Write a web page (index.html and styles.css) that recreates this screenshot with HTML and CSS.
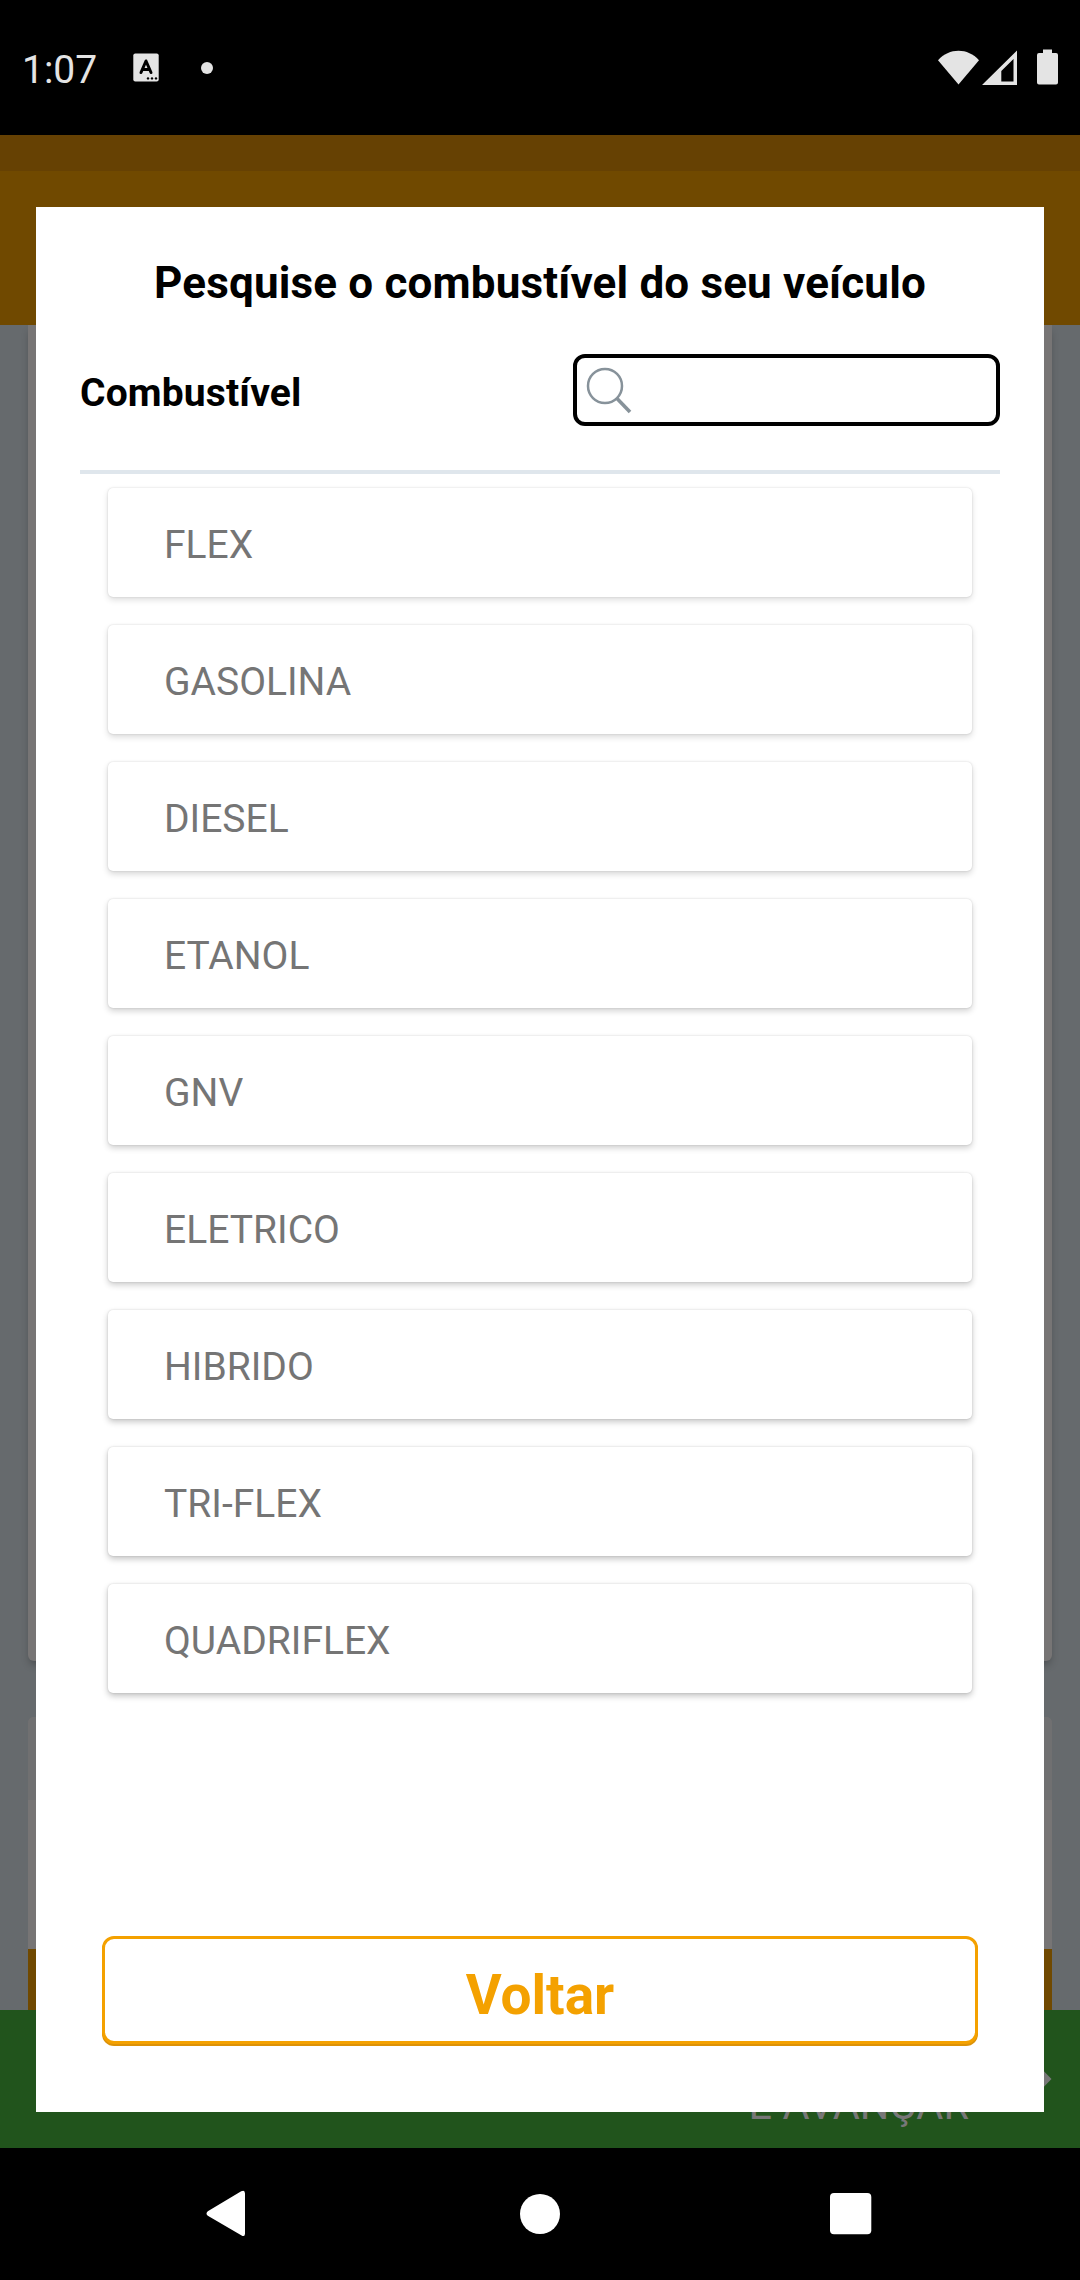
FILE: index.html
```html
<!DOCTYPE html>
<html lang="pt-BR">
<head>
<meta charset="utf-8">
<title>Combustível</title>
<link rel="stylesheet" href="styles.css">
</head>
<body>
<header class="status">
  <span class="clock">1:07</span>
  <svg class="app-icon" width="26" height="29" viewBox="0 0 26 29"><rect x=".3" y=".5" width="25.4" height="28" rx="2" fill="#e4e4e4"/><path d="M8 19.5 L13 8 L18 19.5 M9.8 16.5 H16.2" fill="none" stroke="#000" stroke-width="3" stroke-linecap="round" stroke-linejoin="round"/><g fill="#000"><circle cx="15" cy="25.4" r="1.2"/><circle cx="19" cy="25.4" r="1.2"/><circle cx="23" cy="25.4" r="1.2"/></g></svg>
  <i class="dot"></i>
  <svg class="signals" width="121" height="37" viewBox="0 0 121 37" fill="#e4e4e4"><path d="M0 11.2 C11 -1.5 30 -1.5 41 11.2 L20.5 35.5 Z"/><path fill-rule="evenodd" d="M79 1.5 V36 H44 Z M75.5 10 L63.3 22 V32.5 H75.5 Z"/><path d="M105 .5 H114 V4 H118 Q120 4 120 6 V33.5 Q120 35.5 118 35.5 H101 Q99 35.5 99 33.5 V6 Q99 4 101 4 H105 Z"/></svg>
</header>
<main class="stage">
  <div class="page">
    <div class="page-strip"></div>
    <div class="page-header"></div>
    <div class="page-body">
      <div class="panel panel-form"></div>
      <div class="panel panel-next">
        <div class="panel-title"></div>
        <div class="panel-action"></div>
      </div>
    </div>
    <div class="page-footer">
      <span class="advance">SALVAR<br>E AVANÇAR</span>
      <svg width="28" height="44" viewBox="0 0 28 44"><path d="M0 0 H6 L27.5 22 L6 44 H0 Z" fill="#777"/></svg>
    </div>
  </div>
  <section class="modal">
    <h1 class="title">Pesquise o combustível do seu veículo</h1>
    <div class="search-row">
      <label class="label" for="q">Combustível</label>
      <div class="search">
        <svg width="46" height="48" viewBox="0 0 46 48" fill="none" stroke="#87929a"><circle cx="19" cy="19" r="17" stroke-width="2.5"/><path d="M31 31.5 L44 45" stroke-width="3.6"/></svg>
        <input class="query" id="q" type="text">
      </div>
    </div>
    <ul class="options">
      <li class="option e1">FLEX</li>
      <li class="option e2">GASOLINA</li>
      <li class="option e3">DIESEL</li>
      <li class="option e4">ETANOL</li>
      <li class="option e5">GNV</li>
      <li class="option e6">ELETRICO</li>
      <li class="option e7">HIBRIDO</li>
      <li class="option e8">TRI-FLEX</li>
      <li class="option e9">QUADRIFLEX</li>
    </ul>
    <button class="back">Voltar</button>
  </section>
</main>
<nav class="navbar">
  <svg width="40" height="48" viewBox="0 0 40 48" fill="#fff"><path d="M35.2 1.3 Q39 -.5 39 3.5 V43.5 Q39 47.500 35.200 45.200 L1.800 25.800 Q-.8 23.500 1.800 21.200 Z"/></svg>
  <svg width="40" height="40" viewBox="0 0 40 40"><circle cx="20" cy="20" r="20" fill="#fff"/></svg>
  <svg width="42" height="42" viewBox="0 0 42 42"><rect width="41.300" height="41.300" rx="4" fill="#fff"/></svg>
</nav>
</body>
</html>
```

FILE: styles.css
```css
* { box-sizing: border-box; }
body {
  margin: 0;
  width: 1080px;
  height: 2280px;
  overflow: hidden;
  display: flex;
  flex-direction: column;
  background: #000;
  font-family: Roboto, "Liberation Sans", sans-serif;
}
svg { display: block; flex: none; }

.status {
  height: 135px;
  padding: 0 21px 0 22px;
  display: flex;
  align-items: center;
  color: #e4e4e4;
}
.clock { width: 111px; font-size: 39px; line-height: 46px; padding-top: 4px; }
.dot { width: 12px; height: 12px; margin-left: 42px; border-radius: 50%; background: #e4e4e4; }
.signals { margin-left: auto; }

.stage { height: 2013px; display: grid; }
.page, .modal { grid-area: 1 / 1; }
.page { display: flex; flex-direction: column; background: #666a6d; }
.page-strip { height: 36px; background: #664103; }
.page-header { height: 154px; background: #704900; }
.page-body {
  height: 1685px;
  padding: 0 28px;
  display: flex;
  flex-direction: column;
  gap: 56px;
}
.panel { background: #777575; }
.panel-form { height: 1336px; border-radius: 0 0 6px 6px; box-shadow: 0 5px 8px -2px rgba(0, 0, 0, .3); }
.panel-next { height: 293px; display: flex; flex-direction: column; justify-content: space-between; border-radius: 6px 6px 0 0; overflow: hidden; }
.panel-title { height: 83px; background: #707071; }
.panel-action { height: 61px; background: #704900; }
.page-footer {
  height: 138px;
  padding-right: 28px;
  display: flex;
  align-items: center;
  justify-content: flex-end;
  gap: 55px;
  background: #21541c;
}
.advance { color: #777; font-size: 41.5px; line-height: 51px; text-align: right; }

.modal {
  position: relative;
  margin: 72px 36px 36px;
  padding: 0 44px;
  display: flex;
  flex-direction: column;
  background: #fff;
}
.title {
  margin: 49px 0 0;
  font-size: 44px;
  line-height: 54px;
  font-weight: 700;
  letter-spacing: .16px;
  text-align: center;
  white-space: nowrap;
}
.search-row {
  height: 164px;
  padding-top: 44px;
  display: flex;
  align-items: flex-start;
  justify-content: space-between;
  border-bottom: 4px solid #dfe6ec;
}
.label { font-size: 39px; line-height: 46px; font-weight: 700; padding-top: 16px; letter-spacing: .15px; }
.search {
  width: 427px;
  height: 72px;
  padding: 6px 6px 0 9px;
  display: flex;
  border: 4px solid #000;
  border-radius: 12px;
}
.search svg { margin-top: 3px; }
.query { flex: 1; min-width: 0; border: 0; outline: 0; background: none; font: 39px Roboto, sans-serif; }

.options {
  margin: 14px 28px 0;
  padding: 0;
  list-style: none;
  display: flex;
  flex-direction: column;
  gap: 28px;
}
.option {
  height: 109px;
  padding: 34px 56px 0;
  font-size: 39px;
  line-height: 46px;
  color: #757575;
  background: #fff;
  border-radius: 5px;
  box-shadow: 0 3px 6px rgba(0, 0, 0, var(--depth)), 0 0 2px rgba(0, 0, 0, .16);
}
.e1 { --depth: .13; }
.e2 { --depth: .15; }
.e3 { --depth: .16; }
.e4 { --depth: .18; }
.e5 { --depth: .19; }
.e6 { --depth: .2; }
.e7 { --depth: .22; }
.e8 { --depth: .23; }
.e9 { --depth: .24; }

.back {
  height: 108px;
  margin: auto 22px 68px;
  padding: 9px 0 0;
  border: 3px solid #f4a100;
  border-radius: 12px;
  background: #fff;
  box-shadow: 0 2px 0 #dc9208;
  color: #f4a100;
  font: 700 55px/64px Roboto, sans-serif;
}

.navbar {
  height: 132px;
  padding: 0 208px 0 206px;
  display: grid;
  grid-template-columns: 1fr auto 1fr;
  align-items: center;
}
.navbar svg:nth-child(2) { margin-left: 2px; }
.navbar svg:last-child { justify-self: end; }
```
